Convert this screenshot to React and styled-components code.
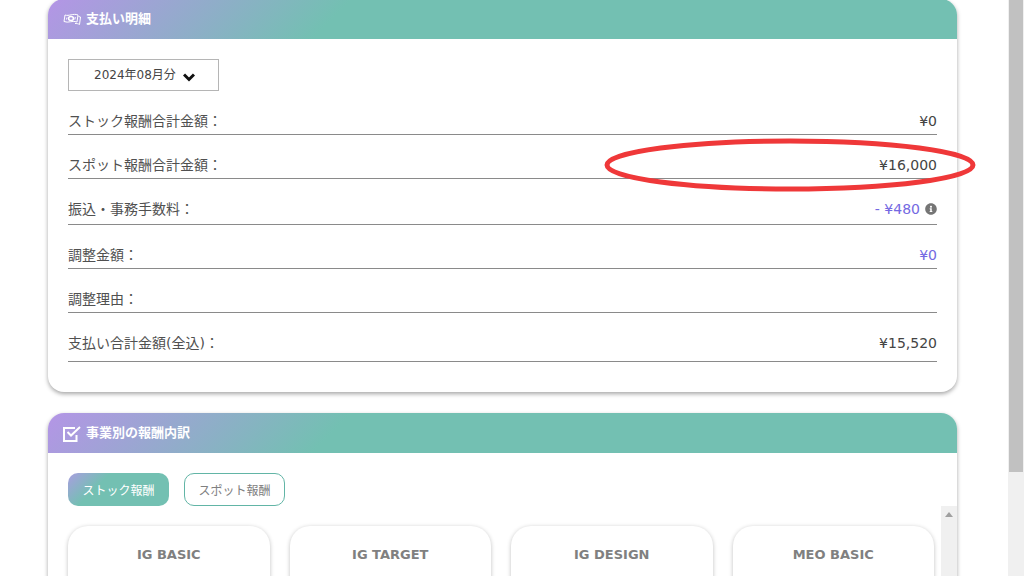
import React, { useState } from "react";
import styled, { createGlobalStyle } from "styled-components";
import { FaInfoCircle } from "react-icons/fa";

const GlobalStyle = createGlobalStyle`
  * {
    box-sizing: border-box;
  }

  body {
    margin: 0;
    background: #fff;
    color: #505050;
    font-family: "DejaVu Sans", "Noto Sans CJK JP", sans-serif;
    font-size: 14px;
  }

  button, select {
    font-family: inherit;
  }
`;

const Page = styled.div`
  display: flex;
  height: 100vh;
  overflow: hidden;
`;

const Main = styled.main`
  flex: 1;
  min-width: 0;
  display: flex;
  flex-direction: column;
  gap: 21px;
  margin-top: -1px;
  padding: 0 51px 0 48px;
`;

const Track = styled.div`
  flex: none;
  width: 16px;
  padding: ${(props) => (props.$small ? "6px 0" : "0 1px")};
  background: #f0f0f0;
`;

const Thumb = styled.div`
  height: 82%;
  background: #c1c1c1;
`;

const UpArrow = styled.svg`
  display: block;
  width: 8px;
  height: 5px;
  margin: 0 auto;
`;

const Card = styled.section`
  flex: none;
  border-radius: 16px;
  background: #fff;
  box-shadow: 0 2px 4px rgba(0, 0, 0, 0.35);
`;

const CardHeader = styled.header`
  display: flex;
  align-items: center;
  gap: 4px;
  height: 40px;
  padding: 0 14px;
  border-radius: 16px 16px 0 0;
  background: linear-gradient(135deg, #b495e6 0%, #73c0b2 32%);
  color: #fff;
`;

const CardTitle = styled.h2`
  margin: 0;
  font-size: 13px;
  font-weight: 700;
  line-height: 20px;
`;

const HeaderIcon = styled.svg`
  width: 20px;
  height: 18px;
  fill: none;
  stroke: #fff;
`;

const CardBody = styled.div`
  padding: 20px 20px 30px;
`;

const MonthPicker = styled.div`
  position: relative;
  width: 151px;
`;

const MonthSelect = styled.select`
  display: block;
  width: 100%;
  height: 32px;
  padding: 0 25px;
  border: 1px solid #b5b5b5;
  border-radius: 0;
  background: #fff;
  color: #444;
  font-size: 12px;
  appearance: none;
`;

const Chevron = styled.svg`
  position: absolute;
  top: 14px;
  right: 24px;
  width: 12px;
  height: 9px;
  fill: none;
  stroke: #111;
  stroke-width: 3;
  pointer-events: none;
`;

const Rows = styled.dl`
  margin: 0;
`;

const Row = styled.div`
  position: relative;
  display: flex;
  justify-content: space-between;
  padding: 20px 0 ${(props) => props.$bottom || 3}px;
  border-bottom: 1px solid #8a8a8a;
  line-height: 20px;
`;

const Label = styled.dt``;

const Amount = styled.dd`
  display: flex;
  align-items: center;
  gap: 5px;
  margin: 0;
  color: ${(props) => (props.$adjust ? "#7469e2" : "#444")};
`;

const InfoIcon = styled(FaInfoCircle)`
  width: 12px;
  height: 12px;
  color: #757575;
`;

const Marker = styled.svg`
  position: absolute;
  top: 3px;
  right: -39px;
  z-index: 1;
  width: 372px;
  height: 54px;
  fill: none;
  stroke: #ef3839;
  stroke-width: 5;
  pointer-events: none;
`;

const Tabs = styled.div`
  display: flex;
  gap: 15px;
  padding: 20px 20px 0;
`;

const Tab = styled.button`
  width: 101px;
  height: 33px;
  padding: 0;
  border: ${(props) => (props.$active ? "none" : "1px solid #62b5a6")};
  border-radius: 10px;
  background: ${(props) =>
    props.$active ? "linear-gradient(135deg, #a99ee0 0%, #73c0b2 32%)" : "#fff"};
  color: ${(props) => (props.$active ? "#fff" : "#808080")};
  font-size: 12px;
  cursor: pointer;
`;

const ScrollArea = styled.div`
  display: flex;
`;

const PlanGrid = styled.div`
  flex: 1;
  display: grid;
  grid-template-columns: repeat(4, 1fr);
  gap: 20px;
  padding: 20px 7px 20px 20px;
`;

const Plan = styled.article`
  height: 160px;
  padding: 19px 20px;
  border-radius: 20px;
  box-shadow: 0 1px 4px rgba(0, 0, 0, 0.25);
  text-align: center;
`;

const PlanName = styled.h3`
  margin: 0;
  color: #808080;
  font-size: 13px;
  line-height: 20px;
`;

const payments = [
  { label: "ストック報酬合計金額：", amount: "¥0" },
  { label: "スポット報酬合計金額：", amount: "¥16,000", marked: true },
  { label: "振込・事務手数料：", amount: "- ¥480", adjust: true, info: true, bottom: 5 },
  { label: "調整金額：", amount: "¥0", adjust: true },
  { label: "調整理由：", amount: "" },
  { label: "支払い合計金額(全込)：", amount: "¥15,520", bottom: 8 },
];

const tabs = ["ストック報酬", "スポット報酬"];
const plans = ["IG BASIC", "IG TARGET", "IG DESIGN", "MEO BASIC"];

function MoneyIcon() {
  return (
    <HeaderIcon viewBox="0 0 20 18" aria-hidden="true">
      <path d="M3 5C7 6.500 11 3 16 5L15 12C11 10 6 13.500 2 11.500Z" />
      <ellipse cx="9" cy="8.500" rx="2.400" ry="2" strokeWidth="1.500" />
      <path d="M5 7.500L4.500 9.500M13.300 7L12.800 9.500" />
      <path d="M16.500 6.500L18.500 7L17.500 14.500C16 13.500 14.500 13.500 13 13.500" />
    </HeaderIcon>
  );
}

function CheckIcon() {
  return (
    <HeaderIcon viewBox="0 0 20 18" strokeWidth="2" aria-hidden="true">
      <path d="M13 4H2V17H14.500V11" />
      <path d="M5.500 8L9 11.500L18 3" />
    </HeaderIcon>
  );
}

function App() {
  const [month, setMonth] = useState("2024-08");
  const [activeTab, setActiveTab] = useState(tabs[0]);

  return (
    <>
      <GlobalStyle />
      <Page>
        <Main>
          <Card>
            <CardHeader>
              <MoneyIcon />
              <CardTitle>支払い明細</CardTitle>
            </CardHeader>
            <CardBody>
              <MonthPicker>
                <MonthSelect
                  aria-label="対象月"
                  value={month}
                  onChange={(e) => setMonth(e.target.value)}
                >
                  <option value="2024-08">2024年08月分</option>
                </MonthSelect>
                <Chevron viewBox="0 0 12 9" aria-hidden="true">
                  <path d="M1 1.500L6 6.500L11 1.500" />
                </Chevron>
              </MonthPicker>
              <Rows>
                {payments.map((item) => (
                  <Row key={item.label} $bottom={item.bottom}>
                    <Label>{item.label}</Label>
                    <Amount $adjust={item.adjust}>
                      {item.amount}
                      {item.info && <InfoIcon />}
                    </Amount>
                    {item.marked && (
                      <Marker viewBox="0 0 372 54" aria-hidden="true">
                        <ellipse cx="186" cy="27" rx="183" ry="24" />
                      </Marker>
                    )}
                  </Row>
                ))}
              </Rows>
            </CardBody>
          </Card>
          <Card>
            <CardHeader>
              <CheckIcon />
              <CardTitle>事業別の報酬内訳</CardTitle>
            </CardHeader>
            <Tabs>
              {tabs.map((tab) => (
                <Tab
                  key={tab}
                  type="button"
                  $active={tab === activeTab}
                  onClick={() => setActiveTab(tab)}
                >
                  {tab}
                </Tab>
              ))}
            </Tabs>
            <ScrollArea>
              <PlanGrid>
                {plans.map((plan) => (
                  <Plan key={plan}>
                    <PlanName>{plan}</PlanName>
                  </Plan>
                ))}
              </PlanGrid>
              <Track $small>
                <UpArrow viewBox="0 0 8 5">
                  <path d="M0 5L4 0L8 5Z" fill="#a0a0a0" />
                </UpArrow>
              </Track>
            </ScrollArea>
          </Card>
        </Main>
        <Track>
          <Thumb />
        </Track>
      </Page>
    </>
  );
}

export default App;
